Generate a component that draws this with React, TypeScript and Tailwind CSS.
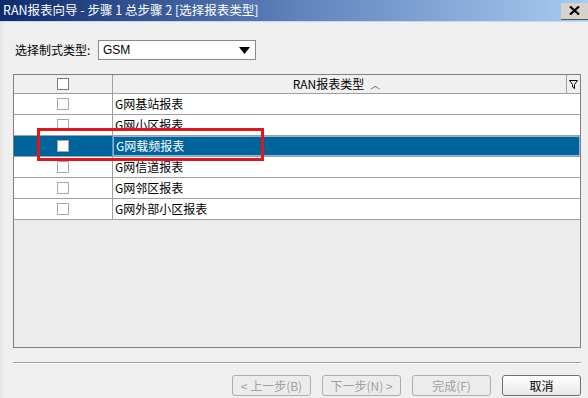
import { useState } from 'react';

const rows = ['G网基站报表', 'G网小区报表', 'G网载频报表', 'G网信道报表', 'G网邻区报表', 'G网外部小区报表'];

function Box({ head = false }: { head?: boolean }) {
  return (
    <span
      className={`block w-[12px] h-[12px] border bg-white ${head ? 'border-[#7a7a7a]' : 'border-[#a8a8a8]'}`}
    />
  );
}

function Btn({ label, enabled = false }: { label: string; enabled?: boolean }) {
  return (
    <button
      className={`w-[79px] h-[21px] rounded-[3px] border text-[12px] flex items-center justify-center ${
        enabled
          ? 'border-[#707070] bg-gradient-to-b from-white to-[#e8e8e8] text-black'
          : 'border-[#adadad] bg-[#ececec] text-[#a0a0a0]'
      }`}
    >
      {label}
    </button>
  );
}

export default function App() {
  const [selected] = useState(2);

  return (
    <div className="relative w-[588px] h-[398px] overflow-hidden bg-[#efefef] flex flex-col font-['Noto_Sans_CJK_SC',sans-serif] text-[12px] text-black">
      {/* title bar */}
      <div className="h-[22px] flex items-center justify-between bg-gradient-to-r from-[#0e2a6c] via-[#5f82bb] to-[#a9ccf2] border-b border-[#c8d8ec]">
        <span className="pl-[3px] text-white text-[12.5px] leading-none">RAN报表向导 - 步骤 1 总步骤 2 [选择报表类型]</span>
        <span className="w-[27px] h-[17px] mt-[1px] bg-[#d6d3cc] border-b border-[#555] flex items-center justify-center">
          <svg width="11" height="9" viewBox="0 0 11 9">
            <path d="M1 0.5 L10 8.5 M10 0.5 L1 8.5" stroke="#000" strokeWidth="2.2" />
          </svg>
        </span>
      </div>

      <div className="flex-1 flex flex-col pl-[13px] pr-[7px] border-l-[3px] border-[#e6e6e6]">
        {/* type selector */}
        <div className="mt-[18px] h-[20px] flex items-center">
          <span className="ml-[-1px] w-[83px]">选择制式类型:</span>
          <div className="w-[158px] h-[20px] border border-[#8a8a8a] bg-white flex items-center justify-between pl-[4px] pr-[5px]">
            <span className="font-['Liberation_Sans',sans-serif] text-[12px]">GSM</span>
            <svg width="11" height="7" viewBox="0 0 11 7">
              <path d="M0 0 H11 L5.5 7 Z" fill="#000" />
            </svg>
          </div>
        </div>

        {/* table */}
        <div className="mt-[14px] ml-[-3px] h-[274px] w-[568px] border border-[#808080] bg-[#ececec] flex flex-col">
          <div className="h-[19px] flex border-b border-[#a0a0a0] bg-[#f0f0f0]">
            <div className="w-[99px] border-r border-[#a0a0a0] flex items-center justify-center">
              <Box head />
            </div>
            <div className="flex-1 flex items-center justify-center">
              <span className="ml-[-6px]">RAN报表类型</span>
              <span className="ml-[6px] text-[10px] text-[#555]">︿</span>
            </div>
            <div className="w-[14px] border-l border-[#a0a0a0] flex items-center justify-center">
              <svg width="9" height="9" viewBox="0 0 9 9">
                <path d="M0.5 0.5 H8.5 L5.5 4.5 V8.5 L3.5 7 V4.5 Z" fill="none" stroke="#000" strokeWidth="1" />
              </svg>
            </div>
          </div>
          {rows.map((r, i) => {
            const sel = i === selected;
            return (
              <div key={r} className={`h-[21px] flex border-b border-[#a0a0a0] ${sel ? 'bg-[#00649c] text-white' : 'bg-white'}`}>
                <div className={`w-[99px] border-r ${sel ? 'border-[#5e8fb4]' : 'border-[#a0a0a0]'} flex items-center justify-center`}>
                  <Box />
                </div>
                <div className={`flex-1 flex items-center pl-[2px] ${sel ? 'border border-[#8fb6d6]' : ''}`}>{r}</div>
              </div>
            );
          })}
        </div>

        {/* separator */}
        <div className="mt-[14px] ml-[-3px] w-[568px] h-[2px] border-t border-[#a0a0a0] border-b border-b-white" />

        {/* buttons */}
        <div className="mt-[11px] flex justify-end gap-[11px]">
          <Btn label="< 上一步(B)" />
          <Btn label="下一步(N) >" />
          <Btn label="完成(F)" />
          <Btn label="取消" enabled />
        </div>
      </div>

      {/* highlight */}
      <div className="absolute left-[37px] top-[128px] w-[227px] h-[33px] border-[3px] border-[#e0161e] pointer-events-none" />
    </div>
  );
}
